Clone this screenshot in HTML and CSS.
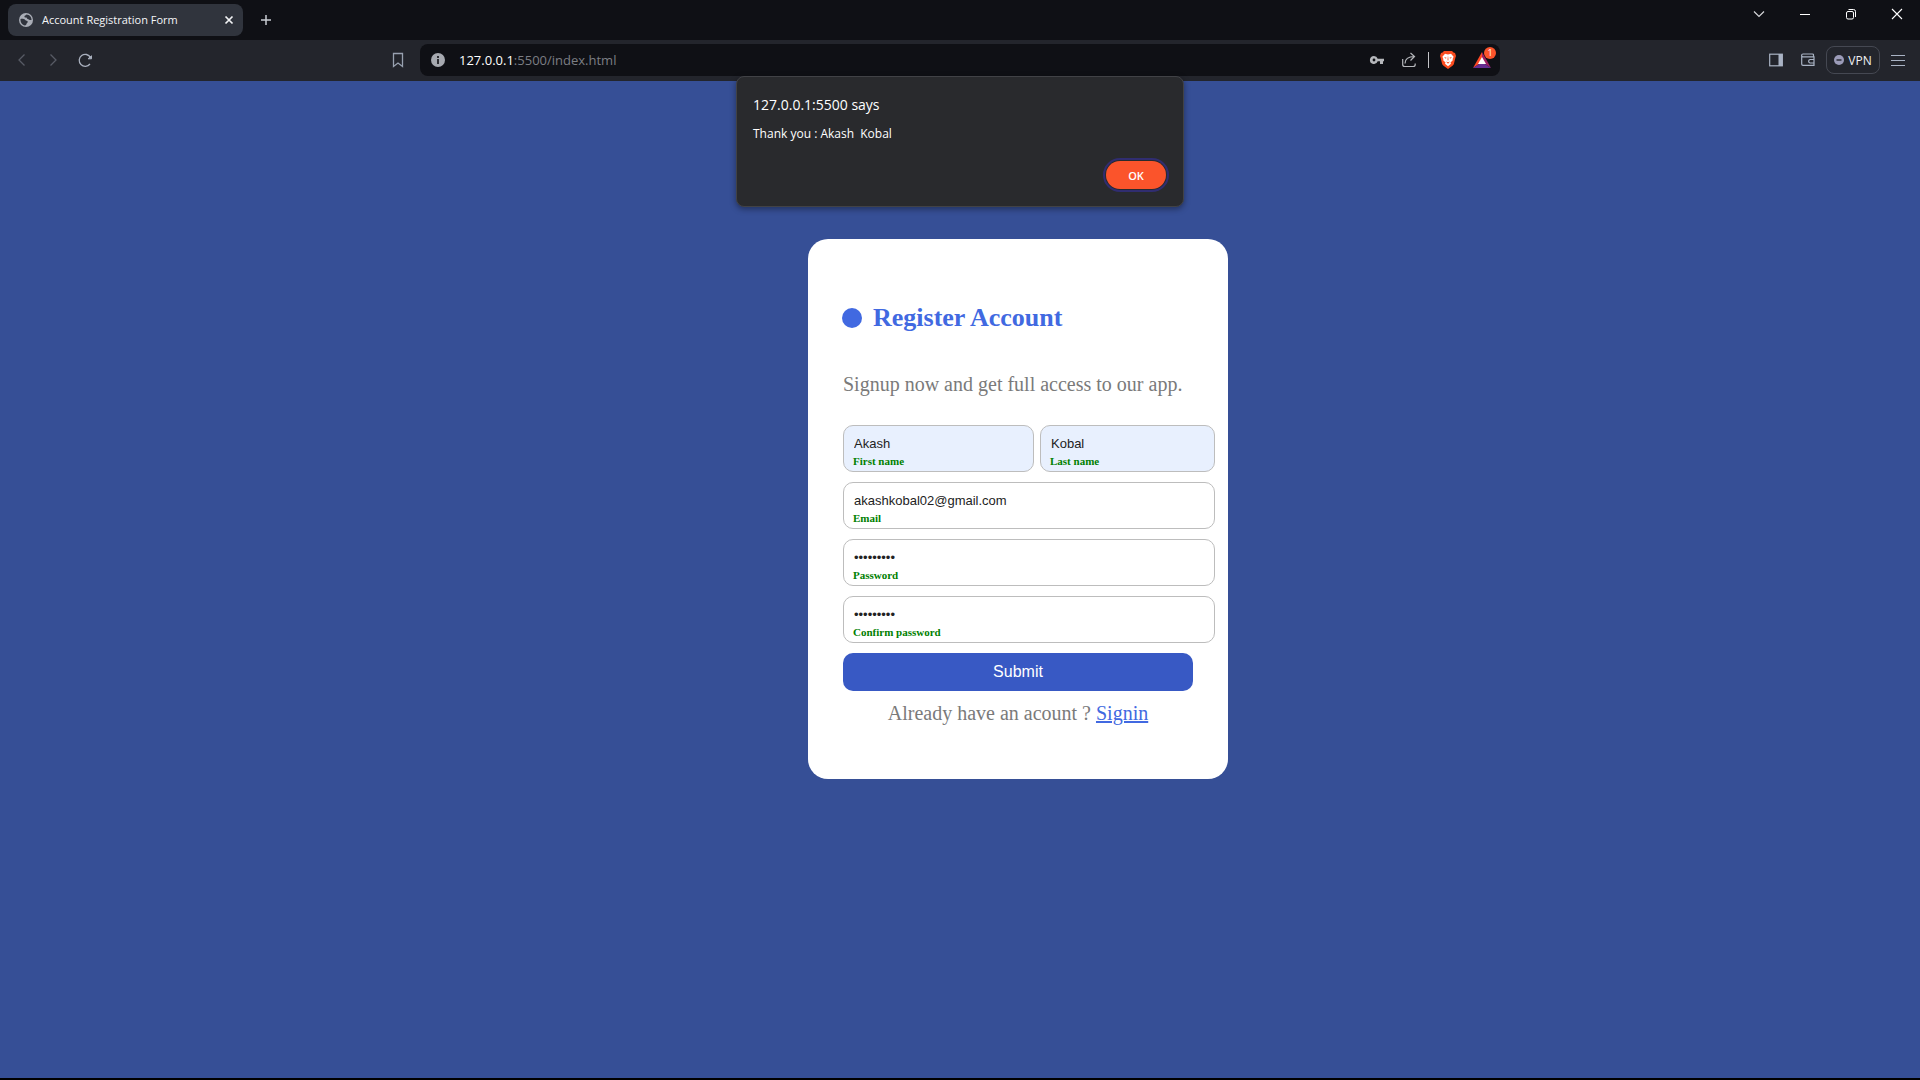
FILE: index.html
```html
<!DOCTYPE html>
<html lang="en">
<head>
<meta charset="utf-8">
<title>Account Registration Form</title>
<link rel="stylesheet" href="styles.css">
</head>
<body>
<div class="window">
  <header class="tabstrip">
    <div class="tab">
      <svg class="tab-icon" width="14" height="14" viewBox="0 0 14 14"><circle cx="7" cy="7" r="7" fill="#a9adb6"/><path d="M1.500 6c1.800-.3 3.700-.1 4.700.9.900.9 2.200.4 2.500 1.500.3 1-.8 1.300-1 2.200-.2.800-.9 1.900-1.700 1.900C3.400 12 1.200 9.500 1.500 6zM7.500 1.500c-.6 1-1.900.9-2.100 2-.1 1 .9 1 1.900 1 .8.100.6 1.300 1.400 1.500 1.200.3 1.900 1.400 3.800 1C12.700 4.200 10.500 1.600 7.500 1.500z" fill="#30343d"/></svg>
      <span class="tab-title">Account Registration Form</span>
      <button class="icon-button" aria-label="Close tab"><svg width="10" height="10" viewBox="0 0 10 10"><path d="M1.500 1.500l7 7M8.500 1.500l-7 7" stroke="#f2f3f5" stroke-width="1.700"/></svg></button>
    </div>
    <button class="icon-button new-tab" aria-label="New tab"><svg width="12" height="12" viewBox="0 0 12 12"><path d="M6 1v10M1 6h10" stroke="#c9ccd2" stroke-width="1.500"/></svg></button>
    <div class="window-controls">
      <button class="icon-button" aria-label="Search tabs"><svg width="12" height="12" viewBox="0 0 12 12"><path d="M1 3.500l5 5 5-5" fill="none" stroke="#d5d6d9" stroke-width="1.200"/></svg></button>
      <button class="icon-button" aria-label="Minimize"><svg width="12" height="12" viewBox="0 0 12 12"><path d="M1 6.500h10" stroke="#fff"/></svg></button>
      <button class="icon-button" aria-label="Restore"><svg width="12" height="12" viewBox="0 0 12 12"><rect x="1.500" y="3.500" width="7" height="7.500" rx="1.500" fill="none" stroke="#fff"/><path d="M3.500 1.500H8.500a2 2 0 0 1 2 2V9" fill="none" stroke="#fff"/></svg></button>
      <button class="icon-button" aria-label="Close"><svg width="12" height="12" viewBox="0 0 12 12"><path d="M1 1l10 10M11 1L1 11" stroke="#fff" stroke-width="1.100"/></svg></button>
    </div>
  </header>

  <nav class="toolbar">
    <div class="toolbar-left">
      <button class="icon-button" aria-label="Back"><svg width="14" height="14" viewBox="0 0 14 14"><path d="M9.500 1.500L4 7l5.500 5.500" fill="none" stroke="#575b65" stroke-width="1.300"/></svg></button>
      <button class="icon-button" aria-label="Forward"><svg width="14" height="14" viewBox="0 0 14 14"><path d="M4.500 1.500L10 7l-5.500 5.500" fill="none" stroke="#575b65" stroke-width="1.300"/></svg></button>
      <button class="icon-button" aria-label="Reload"><svg width="16" height="16" viewBox="0 0 16 16"><path d="M13 12A6 6 0 1 1 13.500 5.500" fill="none" stroke="#a9b0be" stroke-width="1.300"/><path d="M11 6.800h3.500V3.800z" fill="#a9b0be" stroke="#a9b0be"/></svg></button>
      <button class="icon-button bookmark" aria-label="Bookmark this page"><svg width="12" height="16" viewBox="0 0 12 16"><path d="M1.500 1.500h9v13L6 11l-4.500 3.500z" fill="none" stroke="#98a1b0" stroke-width="1.300"/></svg></button>
    </div>
    <div class="address-bar">
      <svg width="14" height="14" viewBox="0 0 14 14"><circle cx="7" cy="7" r="7" fill="#a6a9b0"/><path d="M7 3v2M7 6v5" stroke="#0f1015" stroke-width="1.600"/></svg>
      <span class="url"><span class="url-host">127.0.0.1</span>:5500/index.html</span>
      <div class="address-actions">
        <svg width="16" height="16" viewBox="0 0 16 16"><path fill-rule="evenodd" d="M5 4a4 4 0 1 0 3.700 5.300H11V12h3V9.300h1V6.700H8.700A4 4 0 0 0 5 4zm0 2.600a1.400 1.400 0 1 1 0 2.800 1.400 1.400 0 0 1 0-2.800z" fill="#b5b7bb"/></svg>
        <svg width="16" height="16" viewBox="0 0 16 16"><path d="M1.700 7v5.500a2 2 0 0 0 2 2h8.500a2 2 0 0 0 2-2v-1M4 11.500c0-4.500 3-7 9.500-7M9.500 1l4 3.500-4 4" fill="none" stroke="#b5b7bb" stroke-width="1.200"/></svg>
        <span class="divider"></span>
        <svg width="16" height="18" viewBox="0 0 16 18"><path d="M4 0h8l1.500 1.600L15 2l1 3-.6 1.700-1.600 6.600-1.300 1.500L8 18l-4.500-3.200-1.300-1.500L.6 6.700 0 5l1-3 1.500-.4z" fill="#fb4c1f"/><path d="M5 2.800l3 .6 3-.6 2.600 3-1 2.200.2 1.200-2.300 2.200L11 12.700 8 15.200l-3-2.500.5-1.300-2.300-2.200.2-1.200-1-2.200z" fill="#fff"/><path d="M4 6l2.600.7-.8 1zM12 6l-2.600.7.8 1zM8 4.500l.5 4L8 10l-.5-1.500zM6 10.500l2 .8 2-.8-2 2.200z" fill="#fb4c1f"/></svg>
        <span class="rewards">
          <svg width="18" height="16" viewBox="0 0 18 16"><path d="M9 0L0 16l9-6z" fill="#ff4724"/><path d="M9 0l9 16-9-6z" fill="#9e1f63"/><path d="M0 16h18l-9-6z" fill="#662d91"/><path d="M9 5l4 7H5z" fill="#fff"/></svg>
          <span class="rewards-badge">1</span>
        </span>
      </div>
    </div>
    <div class="toolbar-right">
      <button class="icon-button" aria-label="Sidebar"><svg width="14" height="14" viewBox="0 0 14 14"><rect x=".7" y="1.200" width="12.600" height="11.600" fill="none" stroke="#a9b3c4" stroke-width="1.200"/><path d="M9.500 1h4v12h-4z" fill="#a9b3c4"/></svg></button>
      <button class="icon-button" aria-label="Wallet"><svg width="14" height="14" viewBox="0 0 14 14"><path d="M12.500 4V2a1 1 0 0 0-1-1H2a1.300 1.300 0 0 0 0 2.800h11v8.500H2A1.300 1.300 0 0 1 .7 11V2.500M13 6.500H9a1.800 1.800 0 0 0 0 3.500h4z" fill="none" stroke="#a9b3c4" stroke-width="1.200"/></svg></button>
      <button class="vpn"><svg width="10" height="10" viewBox="0 0 10 10"><circle cx="5" cy="5" r="5" fill="#9b9bb8"/><path d="M2.500 5h5" stroke="#23252c" stroke-width="1.400"/></svg>VPN</button>
      <button class="icon-button" aria-label="Menu"><svg width="14" height="14" viewBox="0 0 14 14"><path d="M0 2.500h14M0 7.500h14M0 12.500h14" stroke="#a9b3c4" stroke-width="1.200"/></svg></button>
    </div>
  </nav>

  <main class="page">
    <form class="card">
      <h1 class="title">Register Account</h1>
      <p class="message">Signup now and get full access to our app.</p>
      <div class="fields">
        <div class="names">
          <div class="field"><input class="autofilled" id="first" type="text" value="Akash"><label for="first">First name</label></div>
          <div class="field"><input class="autofilled" id="last" type="text" value="Kobal"><label for="last">Last name</label></div>
        </div>
        <div class="field"><input id="email" type="email" value="akashkobal02@gmail.com"><label for="email">Email</label></div>
        <div class="field"><input id="password" type="password" value="password1"><label for="password">Password</label></div>
        <div class="field"><input id="confirm" type="password" value="password1"><label for="confirm">Confirm password</label></div>
      </div>
      <button class="submit" type="button">Submit</button>
      <p class="signin">Already have an acount ? <a href="#">Signin</a></p>
    </form>
  </main>

  <div class="alert" role="alertdialog" aria-labelledby="alert-title">
    <h2 class="alert-title" id="alert-title">127.0.0.1:5500 says</h2>
    <p class="alert-text">Thank you : Akash&nbsp; Kobal</p>
    <button class="alert-ok">OK</button>
  </div>
</div>
</body>
</html>
```

FILE: styles.css
```css
* { box-sizing: border-box; }

body {
  margin: 0;
  background: #000;
  font-family: "Open Sans", "Noto Sans", sans-serif;
}

h1, h2, p { margin: 0; }

svg { display: block; flex: none; }

button { font-family: inherit; cursor: pointer; }

.window {
  position: relative;
  display: flex;
  flex-direction: column;
  min-height: 100vh;
  padding-bottom: 2px;
}

.icon-button {
  display: flex;
  align-items: center;
  justify-content: center;
  padding: 0;
  border: 0;
  background: none;
}

/* Tab strip */
.tabstrip {
  display: flex;
  align-items: flex-start;
  height: 40px;
  padding: 4px 8px 0;
  background: #0f1015;
}

.tab {
  display: flex;
  align-items: center;
  gap: 9px;
  width: 235px;
  height: 32px;
  padding: 0 9px 0 11px;
  border-radius: 8px;
  background: #30343d;
}

.tab-title {
  flex: 1;
  color: #f5f6f8;
  font-size: 11px;
  font-weight: 500;
  line-height: 16px;
  white-space: nowrap;
}

.new-tab { width: 46px; height: 32px; }

.window-controls {
  display: flex;
  gap: 34px;
  margin-left: auto;
  padding: 4px 9px 0 0;
}

/* Toolbar */
.toolbar {
  display: flex;
  align-items: center;
  height: 41px;
  background: #23252c;
}

.toolbar-left {
  display: flex;
  align-items: center;
  gap: 17px;
  width: 420px;
  padding: 0 16px 2px 15px;
}

.bookmark { margin-left: auto; }

.address-bar {
  display: flex;
  flex: 1;
  align-items: center;
  gap: 14px;
  height: 32px;
  margin-bottom: 1px;
  padding: 0 9px 0 11px;
  border-radius: 8px;
  background: #0f1015;
}

.url {
  color: #7c7e84;
  font-size: 13px;
  line-height: 20px;
}

.url-host { color: #fff; }

.address-actions {
  display: flex;
  align-items: center;
  gap: 11px;
  margin-left: auto;
}

.address-actions > svg:first-child { margin-right: 5px; }

.divider {
  width: 1px;
  height: 16px;
  background: #c4c5c8;
}

.rewards { position: relative; margin-left: 6px; }

.rewards-badge {
  position: absolute;
  top: -5px;
  right: -5px;
  width: 12px;
  height: 12px;
  border-radius: 50%;
  background: #fb542b;
  color: #fff;
  font-size: 9px;
  line-height: 12px;
  text-align: center;
}

.toolbar-right {
  display: flex;
  align-items: center;
  justify-content: flex-end;
  gap: 18px;
  width: 420px;
  padding: 0 15px 1px 0;
}

.vpn {
  display: flex;
  align-items: center;
  justify-content: center;
  gap: 4px;
  width: 54px;
  height: 28px;
  margin: 0 -7px;
  padding: 0;
  border: 1px solid #454852;
  border-radius: 8px;
  background: none;
  color: #f0f1f4;
  font-size: 12px;
}

/* Page */
.page {
  display: flex;
  flex: 1;
  align-items: flex-start;
  justify-content: center;
  padding: 158px 0 40px 116px;
  background: #364f96;
}

.card {
  display: flex;
  flex-direction: column;
  gap: 10px;
  width: 420px;
  padding: 62px 35px 54px;
  border-radius: 20px;
  background: #fff;
  font-family: "Liberation Serif", serif;
}

.title {
  display: flex;
  align-items: center;
  gap: 11px;
  margin: 0 0 27px -1px;
  color: #4169e1;
  font-size: 26px;
  line-height: 34px;
}

.title::before {
  content: "";
  width: 20px;
  height: 20px;
  border-radius: 50%;
  background: #4169e1;
}

.message, .signin {
  color: #7a7a7a;
  font-size: 20px;
  line-height: 24px;
  white-space: nowrap;
}

.message { margin-bottom: 19px; }

.signin { text-align: center; }

.signin a { color: #4169e1; }

/* The fields run past the button's right edge */
.fields {
  display: flex;
  flex-direction: column;
  gap: 10px;
  margin-right: -22px;
}

.names {
  display: grid;
  grid-template-columns: 191px 1fr;
  gap: 6px;
}

.field { position: relative; }

.field input {
  display: block;
  width: 100%;
  height: 47px;
  padding: 0 10px 10px;
  border: 1px solid #bdbdbd;
  border-radius: 10px;
  outline: 0;
  background: #fff;
  color: #222;
  font-family: "Liberation Sans", sans-serif;
  font-size: 13px;
}

.field input.autofilled { background: #e8f0fe; }

.field label {
  position: absolute;
  bottom: 5px;
  left: 10px;
  color: #008000;
  font-size: 11px;
  font-weight: bold;
  line-height: 12px;
}

.submit {
  height: 38px;
  padding: 0;
  border: 0;
  border-radius: 10px;
  background: #3859c4;
  color: #fff;
  font-family: "Liberation Sans", sans-serif;
  font-size: 16px;
}

/* Alert */
.alert {
  position: absolute;
  top: 76px;
  right: 0;
  left: 0;
  display: flex;
  flex-direction: column;
  width: 448px;
  margin: 0 auto;
  padding: 18px 17px 17px 16px;
  border: 1px solid #414246;
  border-radius: 8px;
  background: #292a2d;
  box-shadow: 0 2px 6px rgba(0, 0, 0, 0.4);
  color: #fff;
}

.alert-title {
  font-size: 14px;
  font-weight: normal;
  line-height: 20px;
}

.alert-text {
  margin-top: 9px;
  font-size: 12px;
  line-height: 20px;
}

.alert-ok {
  align-self: flex-end;
  width: 60px;
  height: 28px;
  margin-top: 17px;
  padding: 0;
  border: 0;
  border-radius: 14px;
  outline: 2px solid #302d70;
  outline-offset: 1px;
  background: #fb542b;
  color: #fff;
  font-size: 11px;
  font-weight: 600;
}
```
